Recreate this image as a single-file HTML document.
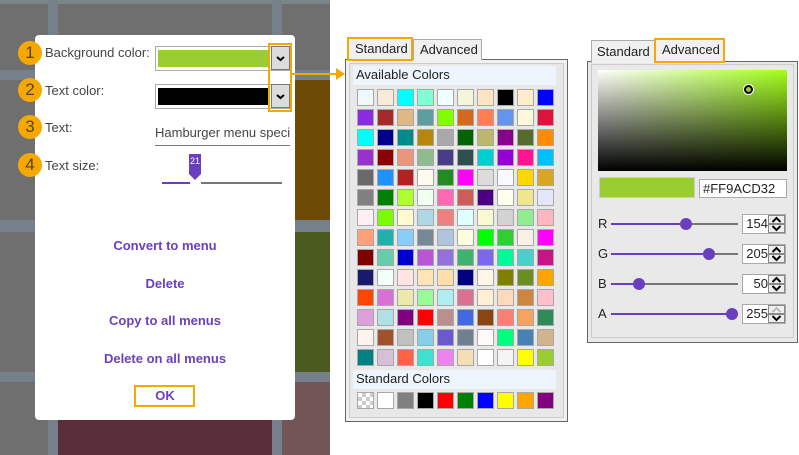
<!DOCTYPE html>
<html><head><meta charset="utf-8"><style>
*{box-sizing:border-box;margin:0;padding:0}
body{width:799px;height:455px;position:relative;overflow:hidden;background:#fff;font-family:"Liberation Sans",sans-serif}
.a{position:absolute}
.sw{position:absolute;width:17px;height:17px;border:1px solid #a8a8a8}
.lbl{position:absolute;font-size:13px;color:#444}
.badge{position:absolute;left:18px;width:24px;height:24px;border-radius:50%;background:#f5a800;color:#5a4200;font-size:17px;text-align:center;line-height:24px}
.btn{position:absolute;left:35px;width:260px;text-align:center;font-size:13px;font-weight:bold;color:#6a40c0}
.dd{position:absolute;left:271px;width:19px;height:24px;background:#dcdcdc;border:1px solid #777}
</style></head><body>
<div class="a" style="left:0;top:0;width:330px;height:455px;background:#6f6f6f"></div>
<div class="a" style="left:0;top:0;width:330px;height:4px;background:#7b8489"></div>
<div class="a" style="left:0;top:70px;width:330px;height:10px;background:#76808a"></div>
<div class="a" style="left:0;top:220px;width:330px;height:12px;background:#76808a"></div>
<div class="a" style="left:0;top:372px;width:330px;height:10px;background:#76808a"></div>
<div class="a" style="left:48px;top:0;width:10px;height:455px;background:#76808a"></div>
<div class="a" style="left:272px;top:0;width:10px;height:455px;background:#76808a"></div>
<div class="a" style="left:295px;top:80px;width:35px;height:140px;background:#6d4a05"></div>
<div class="a" style="left:295px;top:232px;width:35px;height:140px;background:#4a5a1e"></div>
<div class="a" style="left:282px;top:382px;width:48px;height:73px;background:#735558"></div>
<div class="a" style="left:58px;top:420px;width:214px;height:35px;background:#5b2e3c"></div>
<div class="a" style="left:330px;top:0;width:469px;height:455px;background:#fff"></div>

<div class="a" style="left:35px;top:35px;width:260px;height:385px;background:#fff;border-radius:4px"></div>
<div class="badge" style="top:41px">1</div>
<div class="badge" style="top:78px">2</div>
<div class="badge" style="top:115px">3</div>
<div class="badge" style="top:153px">4</div>
<div class="lbl" style="left:45px;top:45px">Background color:</div>
<div class="lbl" style="left:45px;top:83px">Text color:</div>
<div class="lbl" style="left:45px;top:120px">Text:</div>
<div class="lbl" style="left:45px;top:158px">Text size:</div>
<div class="a" style="left:155px;top:46px;width:135px;height:25px;border:1px solid #aaa"></div>
<div class="a" style="left:158px;top:50px;width:112px;height:17px;background:#9acd32"></div>
<div class="a" style="left:155px;top:84px;width:135px;height:25px;border:1px solid #aaa"></div>
<div class="a" style="left:158px;top:88px;width:112px;height:17px;background:#000"></div>
<div class="dd" style="top:46px"><svg width="17" height="22"><path d="M5 10 L8.5 13 L12 10" stroke="#000" stroke-width="2" fill="none"/></svg></div>
<div class="dd" style="top:84px"><svg width="17" height="22"><path d="M5 10 L8.5 13 L12 10" stroke="#000" stroke-width="2" fill="none"/></svg></div>
<div class="a" style="left:268px;top:43px;width:24px;height:69px;border:2px solid #f5a800"></div>
<div class="a" style="left:291px;top:73px;width:46px;height:2px;background:#f5a800"></div>
<div class="a" style="left:336px;top:68px;width:0;height:0;border-left:9px solid #f5a800;border-top:6px solid transparent;border-bottom:6px solid transparent"></div>
<div class="a" style="left:155px;top:125px;font-size:13px;color:#444;width:135px;overflow:hidden;white-space:nowrap">Hamburger menu speci</div>
<div class="a" style="left:155px;top:145px;width:135px;height:1px;background:#777"></div>
<div class="a" style="left:162px;top:182px;width:28px;height:2px;background:#6a3fbf"></div>
<div class="a" style="left:201px;top:182px;width:81px;height:2px;background:#777"></div>
<div class="a" style="left:189px;top:154px;width:12px;height:20px;background:#6a3fbf;color:#fff;font-size:9px;text-align:center;line-height:14px">21</div>
<div class="a" style="left:189px;top:174px;width:0;height:0;border-top:6px solid #6a3fbf;border-left:6px solid transparent;border-right:6px solid transparent"></div>
<div class="btn" style="top:238px">Convert to menu</div>
<div class="btn" style="top:276px">Delete</div>
<div class="btn" style="top:313px">Copy to all menus</div>
<div class="btn" style="top:351px">Delete on all menus</div>
<div class="a" style="left:134px;top:385px;width:61px;height:22px;border:2px solid #f5a800"></div>
<div class="btn" style="top:388px">OK</div>

<div class="a" style="left:345px;top:59px;width:223px;height:363px;border:1px solid #666;background:#f0f0f0"></div>
<div class="a" style="left:349px;top:63px;width:215px;height:355px;border:1px solid #ccc;background:#e8e8e8"></div>
<div class="a" style="left:413px;top:39px;width:69px;height:21px;border:1px solid #aaa;border-bottom:none;background:#f0f0f0;font-size:13px;padding:2px 0 0 6px;color:#222">Advanced</div>
<div class="a" style="left:347px;top:37px;width:66px;height:24px;border:2px solid #f5a800;background:#f0f0f0;font-size:13px;padding:2px 0 0 6px;color:#222">Standard</div>
<div class="a" style="left:353px;top:66px;width:203px;height:19px;background:#eef5fc;font-size:13px;padding:1px 0 0 3px;color:#222">Available Colors</div>
<div class="a" style="left:353px;top:370px;width:203px;height:19px;background:#eef5fc;font-size:13px;padding:1px 0 0 3px;color:#222">Standard Colors</div>
<div id="grid"></div>

<div class="a" style="left:587px;top:61px;width:211px;height:282px;border:1px solid #666;background:#e9e9e9"></div>
<div class="a" style="left:591px;top:64px;width:203px;height:274px;border:1px solid #ccc"></div>
<div class="a" style="left:591px;top:40px;width:64px;height:23px;border:1px solid #aaa;border-bottom:none;background:#f0f0f0;font-size:13px;padding:3px 0 0 5px;color:#222">Standard</div>
<div class="a" style="left:654px;top:38px;width:71px;height:25px;border:2px solid #f5a800;background:#f0f0f0;font-size:13px;padding:2px 0 0 6px;color:#222">Advanced</div>
<div class="a" style="left:598px;top:70px;width:189px;height:101px;background:linear-gradient(to bottom,rgba(0,0,0,0),#000),linear-gradient(to right,#fff,#a2ff1a)"></div>
<div class="a" style="left:744px;top:85px;width:9px;height:9px;border-radius:50%;border:2px solid #000;background:#9acd32;box-shadow:0 0 0 1px #fff"></div>
<div class="a" style="left:599px;top:177px;width:96px;height:21px;background:#9acd32;border:1px solid #ccc"></div>
<div class="a" style="left:699px;top:179px;width:88px;height:19px;border:1px solid #aaa;background:#fff;font-size:13px;padding:1px 0 0 3px;color:#222">#FF9ACD32</div>
<div id="sl"></div>
<script>
var c="aliceblue antiquewhite aqua aquamarine azure beige bisque black blanchedalmond blue blueviolet brown burlywood cadetblue chartreuse chocolate coral cornflowerblue cornsilk crimson cyan darkblue darkcyan darkgoldenrod darkgray darkgreen darkkhaki darkmagenta darkolivegreen darkorange darkorchid darkred darksalmon darkseagreen darkslateblue darkslategray darkturquoise darkviolet deeppink deepskyblue dimgray dodgerblue firebrick floralwhite forestgreen fuchsia gainsboro ghostwhite gold goldenrod gray green greenyellow honeydew hotpink indianred indigo ivory khaki lavender lavenderblush lawngreen lemonchiffon lightblue lightcoral lightcyan lightgoldenrodyellow lightgray lightgreen lightpink lightsalmon lightseagreen lightskyblue lightslategray lightsteelblue lightyellow lime limegreen linen magenta maroon mediumaquamarine mediumblue mediumorchid mediumpurple mediumseagreen mediumslateblue mediumspringgreen mediumturquoise mediumvioletred midnightblue mintcream mistyrose moccasin navajowhite navy oldlace olive olivedrab orange orangered orchid palegoldenrod palegreen paleturquoise palevioletred papayawhip peachpuff peru pink plum powderblue purple red rosybrown royalblue saddlebrown salmon sandybrown seagreen seashell sienna silver skyblue slateblue slategray snow springgreen steelblue tan teal thistle tomato turquoise violet wheat white whitesmoke yellow yellowgreen".split(" ");
var h="";
for(var i=0;i<c.length;i++){h+='<div class="sw" style="left:'+(357+(i%10)*20)+'px;top:'+(89+Math.floor(i/10)*20)+'px;background:'+c[i]+'"></div>';}
var s=["conic-gradient(#ccc 25%,#fff 0 50%,#ccc 0 75%,#fff 0) 0 0/8px 8px","white","gray","black","red","green","blue","yellow","orange","purple"];
for(var i=0;i<10;i++){h+='<div class="sw" style="left:'+(357+i*20)+'px;top:392px;background:'+s[i]+'"></div>';}
document.getElementById("grid").innerHTML=h;
var L=["R","G","B","A"],V=[154,205,50,255],X=[686,709,639,732],g="";
var up='<svg width="15" height="7"><path d="M3.5 6 L7.5 2 L11.5 6" stroke="COL" stroke-width="2" fill="none"/></svg>';
var dn='<svg width="15" height="7"><path d="M3.5 1 L7.5 5 L11.5 1" stroke="#000" stroke-width="2" fill="none"/></svg>';
for(var i=0;i<4;i++){var y=224+i*30;
g+='<div class="a" style="left:598px;top:'+(y-8)+'px;font-size:13px;color:#222">'+L[i]+'</div>';
g+='<div class="a" style="left:611px;top:'+(y-1)+'px;width:'+(X[i]-611)+'px;height:2px;background:#6a3fbf"></div>';
g+='<div class="a" style="left:'+X[i]+'px;top:'+(y-1)+'px;width:'+(738-X[i])+'px;height:2px;background:#777"></div>';
g+='<div class="a" style="left:'+(X[i]-6)+'px;top:'+(y-6)+'px;width:12px;height:12px;border-radius:50%;background:#6a3fbf"></div>';
g+='<div class="a" style="left:742px;top:'+(y-10)+'px;width:44px;height:20px;border:1px solid #aaa;background:#fff"></div>';
g+='<div class="a" style="left:742px;top:'+(y-8)+'px;width:26px;text-align:right;font-size:13px;color:#222">'+V[i]+'</div>';
g+='<div class="a" style="left:768px;top:'+(y-9)+'px;width:17px;height:9px;border:1px solid #888;background:#eee;line-height:0">'+up.replace("COL",i==3?"#bbb":"#000")+'</div>';
g+='<div class="a" style="left:768px;top:'+y+'px;width:17px;height:9px;border:1px solid #888;background:#eee;line-height:0">'+dn+'</div>';}
document.getElementById("sl").innerHTML=g;
</script>
</body></html>
